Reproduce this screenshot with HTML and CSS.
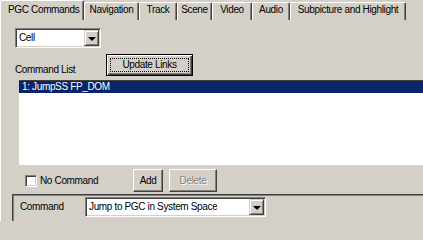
FILE: index.html
```html
<!DOCTYPE html>
<html>
<head>
<meta charset="utf-8">
<link rel="stylesheet" href="styles.css">
</head>
<body>
<div class="window">
  <div class="tabs">
    <div class="tab tab-active w-pgc">PGC Commands</div>
    <div class="tab w-nav">Navigation</div>
    <div class="tab w-track">Track</div>
    <div class="tab w-scene">Scene</div>
    <div class="tab w-video">Video</div>
    <div class="tab w-audio">Audio</div>
    <div class="tab w-sub">Subpicture and Highlight</div>
  </div>
  <div class="panel">
    <div class="combo combo-cell">
      <span class="combo-text">Cell</span>
      <span class="combo-btn"><span class="arrow"></span></span>
    </div>
    <div class="list-head">
      <span class="list-label">Command List</span>
      <button class="btn btn-default"><span class="focus">Update Links</span></button>
    </div>
    <div class="listbox">
      <div class="list-item selected">1: JumpSS FP_DOM</div>
    </div>
    <div class="actions">
      <span class="checkbox"></span>
      <span class="check-label">No Command</span>
      <button class="btn btn-add">Add</button>
      <button class="btn btn-delete" disabled>Delete</button>
    </div>
    <div class="group">
      <span class="group-label">Command</span>
      <div class="combo combo-cmd">
        <span class="combo-text">Jump to PGC in System Space</span>
        <span class="combo-btn"><span class="arrow"></span></span>
      </div>
    </div>
  </div>
</div>
</body>
</html>
```
FILE: styles.css
```css
* { box-sizing: border-box; }
html, body {
  margin: 0;
  padding: 0;
  width: 423px;
  height: 221px;
  overflow: hidden;
  background: #d4d0c8;
}
body {
  font-family: "Liberation Sans", Arial, sans-serif;
  font-size: 10px;
  letter-spacing: -0.35px;
  color: #000;
}
.window {
  width: 423px;
  height: 221px;
  display: flex;
  flex-direction: column;
}
.tabs {
  display: flex;
  height: 20px;
  flex: none;
}
.tab {
  height: 18px;
  margin-top: 2px;
  padding-top: 1px;
  line-height: 12px;
  text-align: center;
  white-space: nowrap;
  border-top: 1px solid #fff;
  border-left: 1px solid #fff;
  border-right: 1px solid #404040;
  border-radius: 2px 2px 0 0;
  box-shadow: inset -1px 0 #808080;
  flex: none;
}
.tab-active {
  height: 20px;
  margin-top: 0;
  padding-top: 3px;
  text-align: left;
  padding-left: 7px;
}
.w-pgc { width: 84px; }
.w-nav { width: 55px; }
.w-track { width: 38px; }
.w-scene { width: 35px; }
.w-video { width: 40px; }
.w-audio { width: 38px; }
.w-sub { width: 116px; }

.panel {
  flex: 1;
  display: flex;
  flex-direction: column;
  box-shadow: inset 1px 0 #fff;
}
.combo {
  display: flex;
  align-items: center;
  justify-content: space-between;
  height: 20px;
  background: #fff;
  border: 1px solid;
  border-color: #808080 #fff #fff #808080;
  box-shadow: inset 1px 1px #404040, inset -1px -1px #d4d0c8;
  padding: 1px;
  flex: none;
}
.combo-cell {
  margin-top: 8px;
  margin-left: 15px;
  width: 86px;
}
.combo-text {
  padding-left: 2px;
  line-height: 16px;
  white-space: nowrap;
  overflow: hidden;
}
.combo-btn {
  width: 15px;
  height: 16px;
  flex: none;
  background: #d4d0c8;
  border: 1px solid;
  border-color: #d4d0c8 #404040 #404040 #d4d0c8;
  box-shadow: inset 1px 1px #fff, inset -1px -1px #808080;
  display: flex;
  align-items: center;
  justify-content: center;
}
.arrow {
  width: 0;
  height: 0;
  border-left: 4px solid transparent;
  border-right: 4px solid transparent;
  border-top: 4px solid #000;
  margin-top: 1px;
}
.list-head {
  display: flex;
  margin-top: 6px;
  margin-left: 15px;
  height: 22px;
  flex: none;
}
.list-label {
  width: 91px;
  align-self: flex-end;
  line-height: 12px;
  white-space: nowrap;
}
.btn {
  appearance: none;
  -webkit-appearance: none;
  margin: 0;
  padding: 0;
  font: inherit;
  letter-spacing: inherit;
  color: #000;
  background: #d4d0c8;
  border: 1px solid;
  border-color: #fff #404040 #404040 #fff;
  box-shadow: inset -1px -1px #808080;
  text-align: center;
  flex: none;
}
.btn-default {
  width: 87px;
  height: 22px;
  border: 1px solid #000;
  box-shadow: inset 1px 1px #fff, inset -1px -1px #404040, inset -2px -2px #808080;
  padding: 3px;
}
.focus {
  display: block;
  height: 14px;
  line-height: 12px;
  border: 1px dotted #000;
}
.listbox {
  margin-top: 4px;
  margin-left: 19px;
  width: 410px;
  height: 85px;
  background: #fff;
  border-top: 1px solid #404040;
  flex: none;
}
.list-item {
  height: 12px;
  line-height: 12px;
  padding-left: 3px;
  white-space: nowrap;
}
.selected {
  background: #0a246a;
  color: #fff;
}
.actions {
  display: flex;
  align-items: center;
  margin-top: 4px;
  height: 23px;
  flex: none;
}
.checkbox {
  margin-left: 25px;
  width: 12px;
  height: 12px;
  background: #fff;
  border: 1px solid;
  border-color: #808080 #fff #fff #808080;
  box-shadow: inset 1px 1px #404040, inset -1px -1px #d4d0c8;
  flex: none;
}
.check-label {
  align-self: flex-start;
  margin-top: 6px;
  margin-left: 3px;
  width: 93px;
  height: 9px;
  overflow: hidden;
  line-height: 12px;
  white-space: nowrap;
}
.btn-add {
  width: 30px;
  height: 23px;
}
.btn-delete {
  margin-left: 6px;
  width: 48px;
  height: 23px;
  color: #808080;
  text-shadow: 1px 1px #fff;
}
.group {
  margin-top: 2px;
  margin-left: 12px;
  flex: 1;
  display: flex;
  align-items: flex-start;
  padding-top: 2px;
  padding-left: 7px;
  border-top: 1px solid #404040;
  border-left: 1px solid #404040;
  box-shadow: inset 1px 1px #808080;
}
.group-label {
  width: 65px;
  line-height: 20px;
  white-space: nowrap;
}
.combo-cmd {
  width: 181px;
}
```
